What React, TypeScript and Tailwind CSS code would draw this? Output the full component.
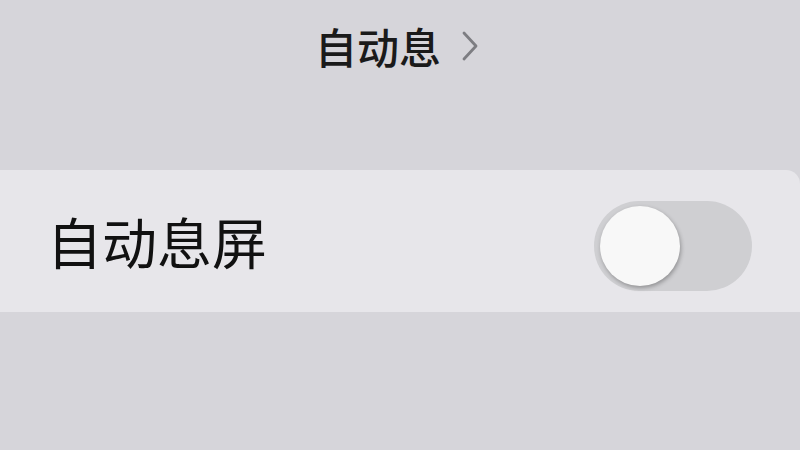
import React from "react";

const cjk = { fontFamily: '"Noto Sans CJK SC", "Noto Sans", sans-serif' };

export default function App() {
  return (
    <div className="w-[800px] h-[450px] bg-[#d6d5da] overflow-hidden flex flex-col" style={cjk}>
      {/* top title with disclosure chevron */}
      <div className="h-[170px] flex flex-col items-center">
        <div className="mt-[21px] flex items-center gap-[20px] pr-[6px]">
          <span className="text-[42px] leading-[50px] font-medium text-[#1a1a1a]">自动息</span>
          <svg width="18" height="30" viewBox="0 0 18 30" fill="none">
            <path d="M3 2 L15 15 L3 28" stroke="#7d7d82" strokeWidth="2.8" strokeLinecap="round" strokeLinejoin="round" />
          </svg>
        </div>
      </div>

      {/* setting row */}
      <div className="h-[142px] bg-[#e7e6ea] rounded-tr-[14px] flex items-center justify-between pl-[47px] pr-[48px]">
        <span className="text-[55px] leading-[60px] text-[#111] -mt-[2px]">自动息屏</span>
        <div className="mt-[10px] w-[158px] h-[90px] rounded-full bg-[#cfcfd2] p-[6px] flex items-center">
          <div className="w-[80px] h-[80px] rounded-full bg-[#f8f8f8] shadow-[1px_2px_4px_rgba(0,0,0,0.3)]" />
        </div>
      </div>

      <div className="flex-1" />
    </div>
  );
}
